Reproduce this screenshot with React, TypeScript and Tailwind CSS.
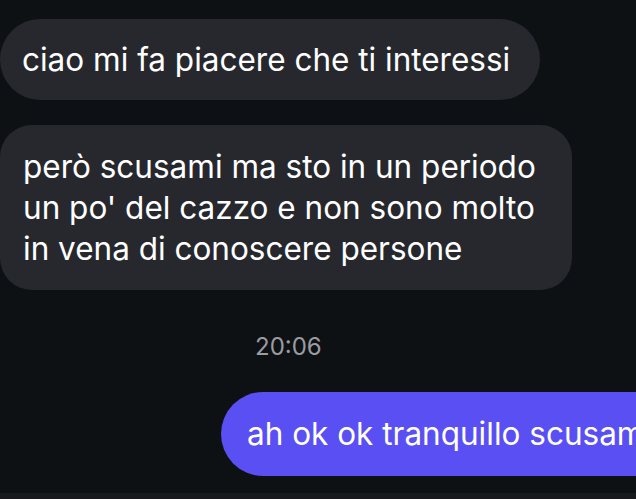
export default function App() {
  const font = { fontFamily: 'Inter, "Noto Sans", sans-serif' }

  return (
    <div
      className="relative flex h-[499px] w-[636px] flex-col overflow-hidden bg-[#0e1114] text-white"
      style={font}
    >
      <div className="flex flex-col pt-[19px]">
        {/* incoming */}
        <div className="w-[540px] rounded-full bg-[#26282d] py-[20px] pl-[22px] text-[31.5px] leading-[41px]">
          ciao mi fa piacere che ti interessi
        </div>

        <div className="mt-[25px] w-[572px] rounded-[32px] bg-[#26282d] py-[21px] pl-[23px] text-[31.5px] leading-[41px]">
          però scusami ma sto in un periodo
          <br />
          un po' del cazzo e non sono molto
          <br />
          in vena di conoscere persone
        </div>

        {/* time */}
        <div className="mt-[42px] pl-[255px] text-[24px] leading-[30px] text-[#9b9ca1]">20:06</div>

        {/* outgoing */}
        <div className="ml-[221px] mt-[30px] w-[520px] whitespace-nowrap rounded-full bg-[#5a4ff2] py-[21px] pl-[26px] text-[31.5px] leading-[42px]">
          ah ok ok tranquillo scusami
        </div>
      </div>

      <div className="mt-auto h-[6px] bg-[#17191d]" />
    </div>
  )
}
